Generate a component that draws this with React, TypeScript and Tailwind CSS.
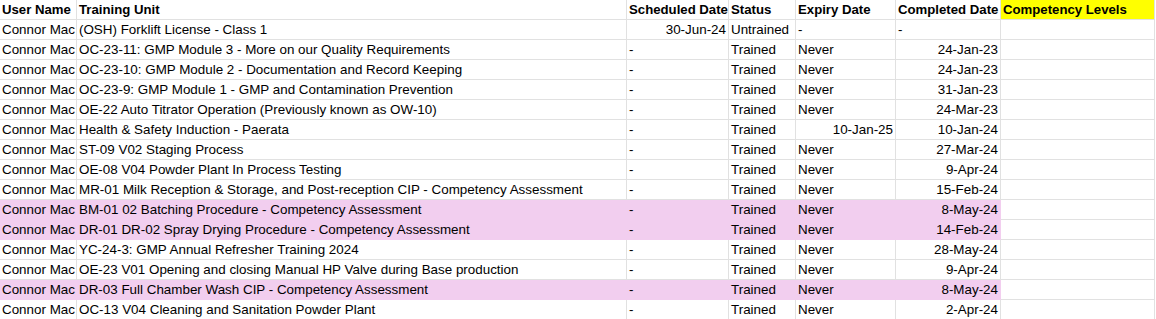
import React from "react";

type Row = {
  unit: string;
  sched: string;
  status: string;
  expiry: string;
  completed: string;
  pink?: boolean;
};

const rows: Row[] = [
  { unit: "(OSH) Forklift License - Class 1", sched: "30-Jun-24", status: "Untrained", expiry: "-", completed: "-" },
  { unit: "OC-23-11: GMP Module 3 - More on our Quality Requirements", sched: "-", status: "Trained", expiry: "Never", completed: "24-Jan-23" },
  { unit: "OC-23-10: GMP Module 2 - Documentation and Record Keeping", sched: "-", status: "Trained", expiry: "Never", completed: "24-Jan-23" },
  { unit: "OC-23-9: GMP Module 1 - GMP and Contamination Prevention", sched: "-", status: "Trained", expiry: "Never", completed: "31-Jan-23" },
  { unit: "OE-22 Auto Titrator Operation (Previously known as OW-10)", sched: "-", status: "Trained", expiry: "Never", completed: "24-Mar-23" },
  { unit: "Health & Safety Induction - Paerata", sched: "-", status: "Trained", expiry: "10-Jan-25", completed: "10-Jan-24" },
  { unit: "ST-09 V02 Staging Process", sched: "-", status: "Trained", expiry: "Never", completed: "27-Mar-24" },
  { unit: "OE-08 V04 Powder Plant In Process Testing", sched: "-", status: "Trained", expiry: "Never", completed: "9-Apr-24" },
  { unit: "MR-01 Milk Reception & Storage, and Post-reception CIP - Competency Assessment", sched: "-", status: "Trained", expiry: "Never", completed: "15-Feb-24" },
  { unit: "BM-01 02 Batching Procedure - Competency Assessment", sched: "-", status: "Trained", expiry: "Never", completed: "8-May-24", pink: true },
  { unit: "DR-01 DR-02 Spray Drying Procedure - Competency Assessment", sched: "-", status: "Trained", expiry: "Never", completed: "14-Feb-24", pink: true },
  { unit: "YC-24-3: GMP Annual Refresher Training 2024", sched: "-", status: "Trained", expiry: "Never", completed: "28-May-24" },
  { unit: "OE-23 V01 Opening and closing Manual HP Valve during Base production", sched: "-", status: "Trained", expiry: "Never", completed: "9-Apr-24" },
  { unit: "DR-03 Full Chamber Wash CIP - Competency Assessment", sched: "-", status: "Trained", expiry: "Never", completed: "8-May-24", pink: true },
  { unit: "OC-13 V04 Cleaning and Sanitation Powder Plant", sched: "-", status: "Trained", expiry: "Never", completed: "2-Apr-24" },
];

const isDate = (s: string) => /\d/.test(s);

function Cell({
  children,
  pink,
  right,
  bold,
  yellow,
}: {
  children?: React.ReactNode;
  pink?: boolean;
  right?: boolean;
  bold?: boolean;
  yellow?: boolean;
}) {
  const bg = yellow
    ? "bg-[#ffff00] border-[#e1e1e1]"
    : pink
    ? "bg-[#f2ceef] border-[#f2ceef]"
    : "bg-white border-[#e1e1e1]";
  return (
    <div
      className={`h-[20px] border-r border-b ${bg} flex items-center overflow-visible whitespace-nowrap px-[2px] ${
        right ? "justify-end" : "justify-start"
      } ${bold ? "font-bold text-[13.2px]" : "text-[13.4px]"}`}
    >
      {children}
    </div>
  );
}

export default function App() {
  return (
    <div
      className="w-[1156px] h-[319px] bg-white overflow-hidden text-black leading-none"
      style={{ fontFamily: '"Liberation Sans", Arial, sans-serif' }}
    >
      <div className="grid grid-cols-[77px_550px_102px_67px_100px_105px_154px]">
        <Cell bold>User Name</Cell>
        <Cell bold>Training Unit</Cell>
        <Cell bold>Scheduled Date</Cell>
        <Cell bold>Status</Cell>
        <Cell bold>Expiry Date</Cell>
        <Cell bold>Completed Date</Cell>
        <Cell bold yellow>Competency Levels</Cell>
        {rows.map((r, i) => (
          <React.Fragment key={i}>
            <Cell pink={r.pink}>Connor Mac</Cell>
            <Cell pink={r.pink}>{r.unit}</Cell>
            <Cell pink={r.pink} right={isDate(r.sched)}>{r.sched}</Cell>
            <Cell pink={r.pink}>{r.status}</Cell>
            <Cell pink={r.pink} right={isDate(r.expiry)}>{r.expiry}</Cell>
            <Cell pink={r.pink} right={isDate(r.completed)}>{r.completed}</Cell>
            <Cell></Cell>
          </React.Fragment>
        ))}
      </div>
    </div>
  );
}
